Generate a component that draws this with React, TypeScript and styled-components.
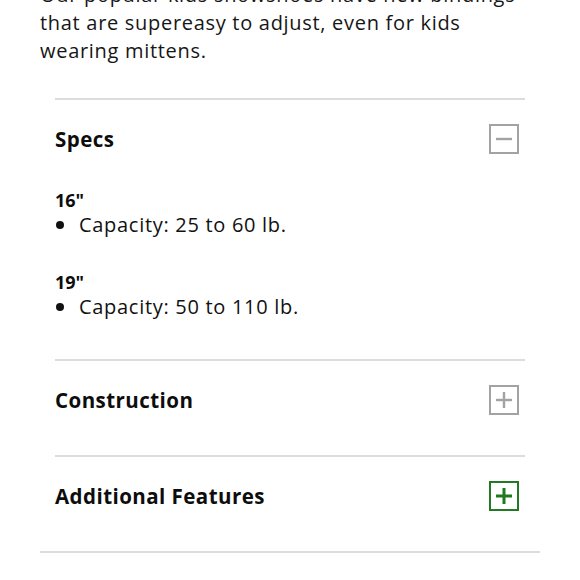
import React from "react";
import styled, { createGlobalStyle } from "styled-components";

const Global = createGlobalStyle`
  html, body { margin: 0; padding: 0; background: #fff; }
  body { font-family: "Open Sans", "Liberation Sans", sans-serif; color: #111; }
`;

const Page = styled.div`
  width: 580px;
  height: 580px;
  overflow: hidden;
  padding: 0 40px;
  box-sizing: border-box;
`;

const Intro = styled.p`
  margin: -19px 0 0;
  max-width: 480px;
  font-size: 20px;
  line-height: 28px;
  letter-spacing: 0.7px;
  color: #161616;
`;

const Accordion = styled.div`
  margin-top: 33px;
  border-bottom: 2px solid #dcdcdc;
`;

const Item = styled.section`
  margin: 0 15px;
  border-top: 2px solid #dcdcdc;
  padding-bottom: 13px;
`;

const Header = styled.div`
  display: flex;
  align-items: center;
  justify-content: space-between;
  padding: 24px 6px 27px 0;
`;

const Title = styled.h3`
  margin: 0;
  font-size: 20.5px;
  line-height: 26px;
  font-weight: 700;
  letter-spacing: 0.45px;
  color: #0d0d0d;
`;

const Toggle = styled.span<{ $green?: boolean }>`
  width: 30px;
  height: 30px;
  box-sizing: border-box;
  border: 2px solid ${(p) => (p.$green ? "#237a23" : "#a3a3a3")};
  display: flex;
  align-items: center;
  justify-content: center;
`;

const Body = styled.div`
  padding: 8px 0 27px;
`;

const Size = styled.div`
  font-size: 18px;
  line-height: 22px;
  font-weight: 700;
  color: #0d0d0d;
  margin-top: 34px;
  &:first-child { margin-top: 0; }
`;

const Bullet = styled.div`
  display: flex;
  align-items: center;
  font-size: 20px;
  line-height: 25px;
  letter-spacing: 0.7px;
  margin-top: 1px;
  &::before {
    content: "";
    width: 8px;
    height: 8px;
    border-radius: 50%;
    background: #111;
    margin: 0 15px 0 1px;
    flex: none;
  }
`;

const Minus = ({ color }: { color: string }) => (
  <svg width="18" height="18" viewBox="0 0 18 18">
    <line x1="1" y1="9" x2="17" y2="9" stroke={color} strokeWidth="2.4" />
  </svg>
);

const Plus = ({ color, w }: { color: string; w: number }) => (
  <svg width="18" height="18" viewBox="0 0 18 18">
    <line x1="1" y1="9" x2="17" y2="9" stroke={color} strokeWidth={w} />
    <line x1="9" y1="1" x2="9" y2="17" stroke={color} strokeWidth={w} />
  </svg>
);

export default function App() {
  return (
    <>
      <Global />
      <Page>
        <Intro>
          Our popular kids snowshoes have new bindings that are supereasy to adjust, even for kids wearing mittens.
        </Intro>
        <Accordion>
          <Item>
            <Header>
              <Title>Specs</Title>
              <Toggle>
                <Minus color="#a3a3a3" />
              </Toggle>
            </Header>
            <Body>
              <Size>16"</Size>
              <Bullet>Capacity: 25 to 60 lb.</Bullet>
              <Size>19"</Size>
              <Bullet>Capacity: 50 to 110 lb.</Bullet>
            </Body>
          </Item>
          <Item>
            <Header>
              <Title>Construction</Title>
              <Toggle>
                <Plus color="#a3a3a3" w={2.4} />
              </Toggle>
            </Header>
          </Item>
          <Item>
            <Header>
              <Title>Additional Features</Title>
              <Toggle $green>
                <Plus color="#1f7a1f" w={3} />
              </Toggle>
            </Header>
          </Item>
        </Accordion>
      </Page>
    </>
  );
}
